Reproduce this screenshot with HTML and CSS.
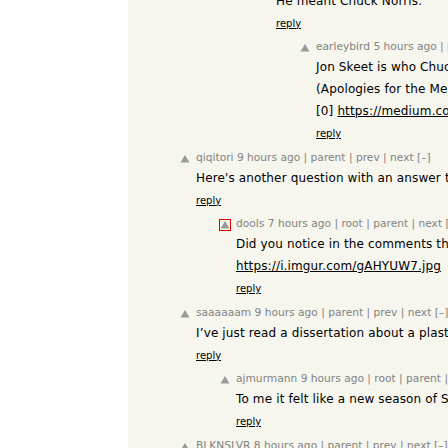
FILE: index.html
```html
<!DOCTYPE html>
<html>
<head>
<meta charset="utf-8">
<title>Thread</title>
<link rel="stylesheet" href="styles.css">
</head>
<body>
<div class="page">
  <div class="thread">

    <div class="comment partial">
      <div class="indent l2"></div>
      <div class="vote"></div>
      <div class="content">
        <p class="text">He meant Chuck Norris.</p>
        <p class="reply"><a href="#">reply</a></p>
      </div>
    </div>

    <div class="comment">
      <div class="indent l3"></div>
      <div class="vote"><svg class="arrow" width="10" height="10" viewBox="0 0 10 10"><polygon points="5,1 9.5,8.5 0.5,8.5"/></svg></div>
      <div class="content">
        <div class="meta"><a href="#">earleybird</a> <a href="#">5 hours ago</a> | <a href="#">parent</a> | <a href="#">prev</a> | <a href="#">next</a> [–]</div>
        <p class="text">Jon Skeet is who Chuck Norris calls when he is stuck on a problem.</p>
        <p class="text">(Apologies for the Meme[0])</p>
        <p class="text">[0] <a href="#">https://medium.com/@mkyong/jon-skeet-facts</a></p>
        <p class="reply"><a href="#">reply</a></p>
      </div>
    </div>

    <div class="comment">
      <div class="indent l0"></div>
      <div class="vote"><svg class="arrow" width="10" height="10" viewBox="0 0 10 10"><polygon points="5,1 9.5,8.5 0.5,8.5"/></svg></div>
      <div class="content">
        <div class="meta"><a href="#">qiqitori</a> <a href="#">9 hours ago</a> | <a href="#">parent</a> | <a href="#">prev</a> | <a href="#">next</a> [–]</div>
        <p class="text">Here's another question with an answer that is quite famous on the site.</p>
        <p class="reply"><a href="#">reply</a></p>
      </div>
    </div>

    <div class="comment">
      <div class="indent l1"></div>
      <div class="vote"><svg class="arrow flagged" width="10" height="10" viewBox="0 0 10 10"><polygon points="5,1 9.5,8.5 0.5,8.5"/></svg></div>
      <div class="content">
        <div class="meta"><a href="#">dools</a> <a href="#">7 hours ago</a> | <a href="#">root</a> | <a href="#">parent</a> | <a href="#">next</a> [–]</div>
        <p class="text">Did you notice in the comments that someone made a picture of it?</p>
        <p class="text"><a href="#">https://i.imgur.com/gAHYUW7.jpg</a></p>
        <p class="reply"><a href="#">reply</a></p>
      </div>
    </div>

    <div class="comment">
      <div class="indent l0"></div>
      <div class="vote"><svg class="arrow" width="10" height="10" viewBox="0 0 10 10"><polygon points="5,1 9.5,8.5 0.5,8.5"/></svg></div>
      <div class="content">
        <div class="meta"><a href="#">saaaaaam</a> <a href="#">9 hours ago</a> | <a href="#">parent</a> | <a href="#">prev</a> | <a href="#">next</a> [–]</div>
        <p class="text">I’ve just read a dissertation about a plastic bag and it was wonderful.</p>
        <p class="reply"><a href="#">reply</a></p>
      </div>
    </div>

    <div class="comment">
      <div class="indent l1"></div>
      <div class="vote"><svg class="arrow" width="10" height="10" viewBox="0 0 10 10"><polygon points="5,1 9.5,8.5 0.5,8.5"/></svg></div>
      <div class="content">
        <div class="meta"><a href="#">ajmurmann</a> <a href="#">9 hours ago</a> | <a href="#">root</a> | <a href="#">parent</a> | <a href="#">next</a> [–]</div>
        <p class="text">To me it felt like a new season of Seinfeld.</p>
        <p class="reply"><a href="#">reply</a></p>
      </div>
    </div>

    <div class="comment">
      <div class="indent l0"></div>
      <div class="vote"><svg class="arrow" width="10" height="10" viewBox="0 0 10 10"><polygon points="5,1 9.5,8.5 0.5,8.5"/></svg></div>
      <div class="content">
        <div class="meta"><a href="#">BLKNSLVR</a> <a href="#">8 hours ago</a> | <a href="#">parent</a> | <a href="#">prev</a> | <a href="#">next</a> [–]</div>
        <p class="text">That is a great read.</p>
        <p class="reply"><a href="#">reply</a></p>
      </div>
    </div>

  </div>
</div>
</body>
</html>
```
FILE: styles.css
```css
html, body {
  margin: 0;
  padding: 0;
  height: 100%;
  overflow: hidden;
  background: #ffffff;
}

body {
  font-family: "DejaVu Sans", Verdana, Geneva, sans-serif;
}

.page {
  margin-left: 128px;
  width: 1000px;
  min-height: 100%;
  background: #f6f6ef;
}

.thread {
  padding-left: 52px;
}

.comment {
  display: flex;
  align-items: flex-start;
  margin-top: 9.5px;
}

.comment.partial {
  margin-top: 0;
}

.indent {
  flex: none;
}

.indent.l0 { width: 0; }
.indent.l1 { width: 40px; }
.indent.l2 { width: 80px; }
.indent.l3 { width: 120px; }

.vote {
  flex: none;
  width: 16px;
}

.arrow {
  display: block;
  margin-top: 3px;
  fill: #9a9a9a;
}

.arrow.flagged {
  outline: 1px solid #e00000;
  outline-offset: 0;
}

.content {
  flex: none;
}

.meta {
  font-size: 8pt;
  line-height: 14px;
  height: 14px;
  color: #828282;
  white-space: nowrap;
}

.meta a {
  color: #828282;
  text-decoration: none;
}

.text {
  margin: 8px 0 0;
  font-size: 12px;
  letter-spacing: 0.14px;
  line-height: 14px;
  color: #000000;
  white-space: nowrap;
}

.meta + .text {
  margin-top: 6px;
}

.partial .text:first-child {
  margin-top: -6.5px;
}

.text a {
  color: #000000;
  text-decoration: underline;
}

.reply {
  margin: 9px 0 0;
  font-size: 10px;
  line-height: 14px;
}

.reply a {
  color: #000000;
  text-decoration: underline;
}
```
